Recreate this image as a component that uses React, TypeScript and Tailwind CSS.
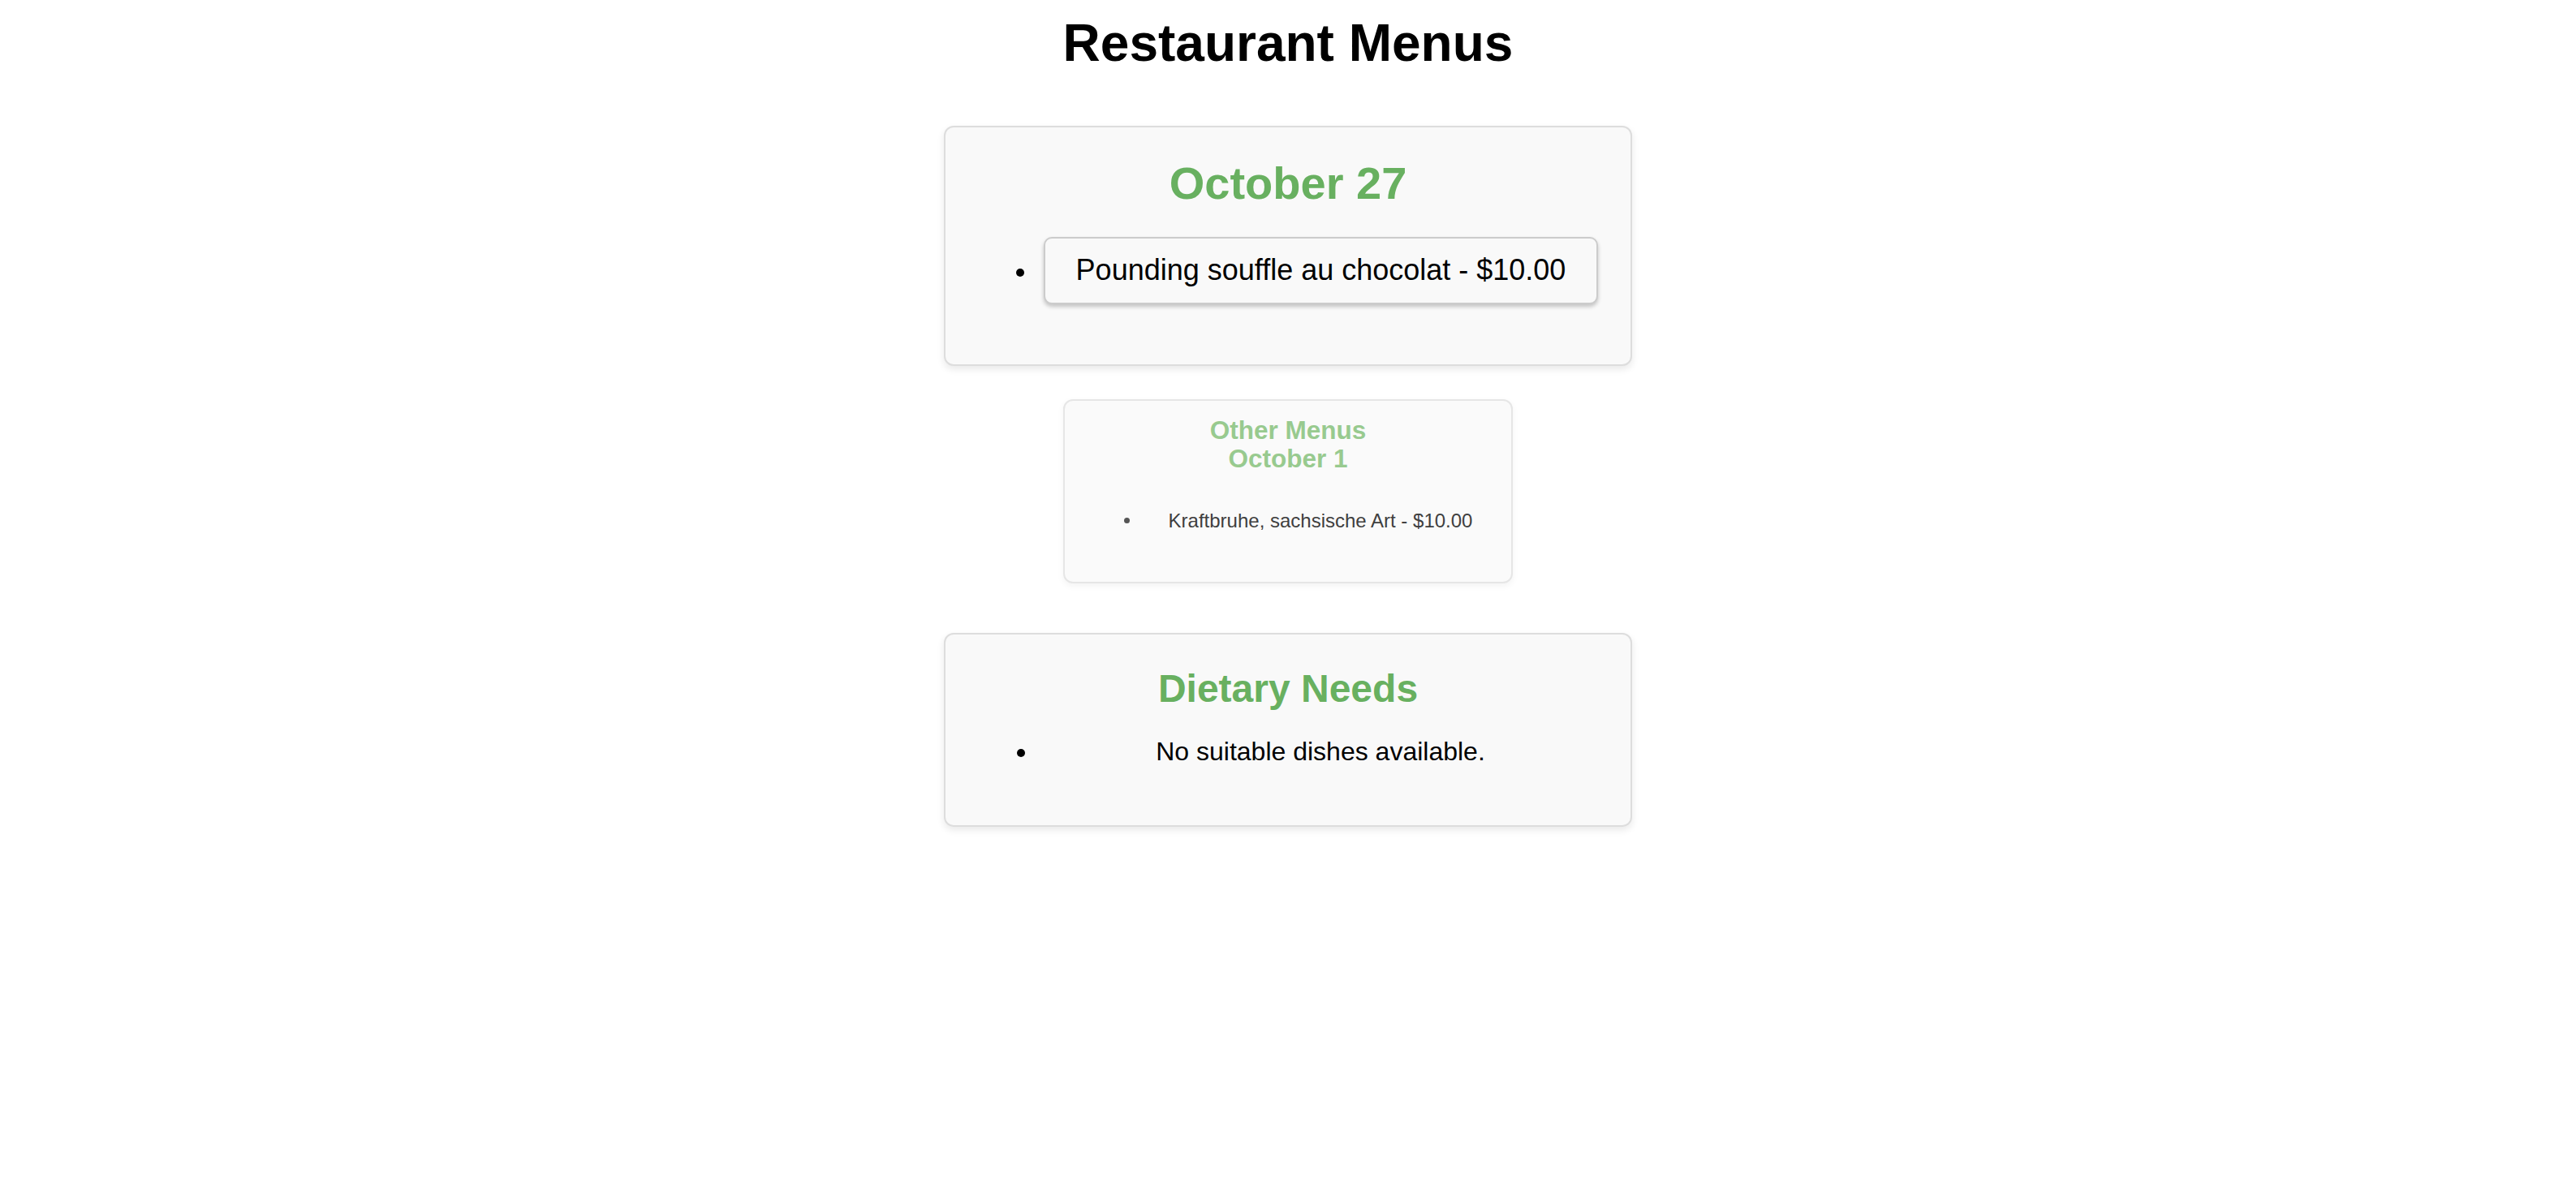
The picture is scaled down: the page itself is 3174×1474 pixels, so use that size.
import React from "react";

export default function App() {
  return (
    <div className="min-h-screen bg-white pt-[16px] text-black [font-family:'Liberation_Sans',Arial,sans-serif]">
      <h1 className="text-center text-[64px] font-bold leading-[74px]">Restaurant Menus</h1>

      <div className="mt-[65px] flex flex-col items-center">
        {/* Current menu */}
        <section className="w-[848px] rounded-[12px] border-2 border-[#dddddd] bg-[#f9f9f9] px-[40px] pt-[37px] pb-[74px] shadow-[0_4px_10px_rgba(0,0,0,0.09)]">
          <h2 className="text-center text-[56px] font-bold leading-[64px] text-[#68b060]">October 27</h2>
          <ul className="mt-[34px]">
            <li className="flex items-start">
              <span className="ml-[47px] mt-[39px] h-[10px] w-[10px] shrink-0 rounded-full bg-black" />
              <div className="ml-[24px] flex-1 rounded-[10px] border-2 border-[#cccccc] bg-[#f9f9f9] pt-[18px] pb-[20px] text-center text-[36px] leading-[41px] shadow-[0_3px_5px_rgba(0,0,0,0.22)]">
                Pounding souffle au chocolat - $10.00
              </div>
            </li>
          </ul>
        </section>

        {/* Other menus */}
        <section className="mt-[41px] w-[554px] rounded-[12px] border-2 border-[#e6e6e6] bg-[#fafafa] pt-[19px] pb-[61px] shadow-[0_3px_8px_rgba(0,0,0,0.05)]">
          <h3 className="text-center text-[31.5px] font-bold leading-[35px] text-[#98ca8f]">
            Other Menus
            <br />
            October 1
          </h3>
          <ul className="mt-[45px] pr-[16px]">
            <li className="flex items-start text-[#3f3f3f]">
              <span className="ml-[73px] mt-[10px] h-[7px] w-[7px] shrink-0 rounded-full bg-[#555555]" />
              <span className="ml-[16px] flex-1 text-center text-[24px] leading-[28px]">
                Kraftbruhe, sachsische Art - $10.00
              </span>
            </li>
          </ul>
        </section>

        {/* Dietary needs */}
        <section className="mt-[61px] w-[848px] rounded-[12px] border-2 border-[#dddddd] bg-[#f9f9f9] px-[40px] pt-[39px] pb-[72px] shadow-[0_4px_10px_rgba(0,0,0,0.09)]">
          <h2 className="text-center text-[48px] font-bold leading-[55px] text-[#68b060]">Dietary Needs</h2>
          <ul className="mt-[32px]">
            <li className="flex items-start">
              <span className="ml-[48px] mt-[15px] h-[10px] w-[10px] shrink-0 rounded-full bg-black" />
              <span className="ml-[22px] flex-1 text-center text-[32px] leading-[37px]">
                No suitable dishes available.
              </span>
            </li>
          </ul>
        </section>
      </div>
    </div>
  );
}
